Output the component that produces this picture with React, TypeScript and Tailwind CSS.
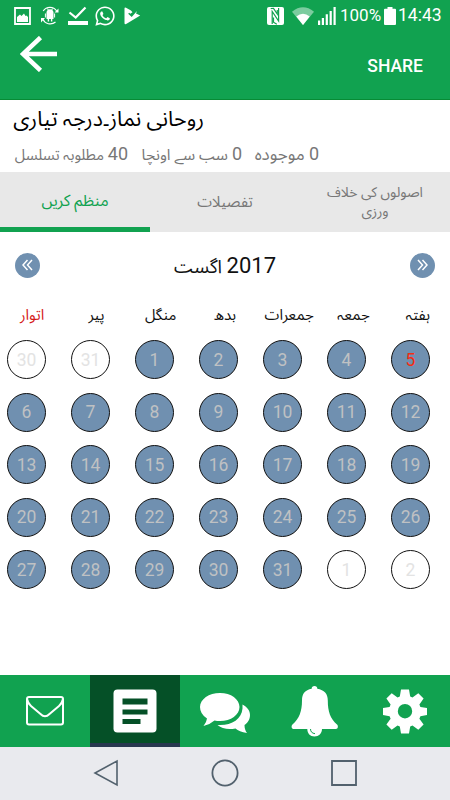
import type { ReactNode } from "react"
import { FaWhatsapp } from "react-icons/fa"


type TabProps = {
    title: string,
    active?: boolean
}

type DayProps = {
    day: number,
    outside?: boolean,
    today?: boolean
}

const stats = [
    { value: 40, label: "مطلوبہ تسلسل", style: "w-[115px] text-[14.8px]" },
    { value: 0, label: "سب سے اونچا", style: "w-[103px] ml-[11px] text-[15.5px]" },
    { value: 0, label: "موجودہ", style: "w-[65px] ml-[12px] text-[17px]" },
]

const weekdays = ["اتوار", "پیر", "منگل", "بدھ", "جمعرات", "جمعہ", "ہفتہ"]

const days: DayProps[] = [
    { day: 30, outside: true },
    { day: 31, outside: true },
    ...Array.from({ length: 31 }, (_, i) => ({ day: i + 1, today: i + 1 === 5 })),
    { day: 1, outside: true },
    { day: 2, outside: true },
]


function StatusBar() {
    return (
        <div className="flex h-[31px] items-center justify-between pl-[14px] pr-[8px] text-white">
            <div className="flex items-center">
                <svg width="17" height="18" viewBox="0 0 17 18" fill="none">
                    <path d="M1 1h15v16H1z" stroke="currentColor" strokeWidth="1.8" />
                    <path d="M3 15V10l3-2.5 1.5 1.5L10 6.5l1.5 2.5 1-.5L14 10v5z" fill="currentColor" />
                </svg>
                <svg className="ml-[10px]" width="18" height="19" viewBox="0 0 18 19" fill="none" stroke="currentColor">
                    <path d="M2.2 5A8.2 8.2 0 0 1 15.7 5M1.7 13A8.2 8.2 0 0 0 14.5 16" strokeWidth="1.2" />
                    <path d="M13.5 6.5h4V2.5zM0 16.5v-4.5h4z" fill="currentColor" stroke="none" />
                    <path d="M5.5 6.5Q5.7 3.5 9 3.3q3.3.2 3.5 3.2V13h-1.2v2.5H9.9V13H8.1v2.5H6.7V13H5.5z" fill="currentColor" stroke="none" />
                    <path d="M4.4 7.5v4M13.6 7.5v4M6.3 2.5l1 1.5M11.7 2.5l-1 1.5" strokeWidth="1" />
                </svg>
                <svg className="ml-[9px]" width="20" height="19" viewBox="0 0 20 19" fill="none">
                    <path d="M1.5 6.5l6.2 5L17.5 1.5" stroke="currentColor" strokeWidth="2.2" />
                    <path d="M0 15h20v4H0z" fill="currentColor" />
                </svg>
                <FaWhatsapp className="ml-[6px]" size={22} />
                <svg className="ml-[8px]" width="17" height="18" viewBox="0 0 17 18">
                    <path d="M.5 1.5Q.5.2 2 .8l5 2.8 1.5 1.6-2.2 1.5-1.1-1-1 1L7.7 10 13 4l-1 2.6 4.2 2L3 16.6Q.5 18 .5 16z" fill="currentColor" />
                </svg>
            </div>
            <div className="flex items-center">
                <svg width="17" height="18" viewBox="0 0 17 18">
                    <rect width="17" height="18" rx="2" fill="currentColor" />
                    <path d="M5.2 17V4.5l6.4 9.5V1M3.7 1.5l2.8-.2 3.8 5.8V3M6.5 10.5v4.7l3.3 2" fill="none" stroke="#11a250" strokeWidth="1.2" />
                </svg>
                <svg className="ml-[8px]" width="22" height="18" viewBox="0 0 22 18" fill="currentColor">
                    <path d="M11 18L0 4.7Q11-4 22 4.7z" opacity=".45" />
                    <path d="M11 18L4.3 9.4Q11 4.3 17.7 9.4z" />
                </svg>
                <svg className="ml-[4px]" width="18" height="18" viewBox="0 0 18 18" fill="currentColor">
                    <path d="M0 13.5h2.2V18H0zM3.8 11H6v7H3.8zM7.7 7.3h2.2V18H7.7zM11.6 4h2.2v14h-2.2zM15.5 0h2.2v18h-2.2z" />
                </svg>
                <span className="ml-[4px] w-[39px] text-[17px] whitespace-nowrap">100%</span>
                <svg className="ml-[5px]" width="12" height="18" viewBox="0 0 12 18" fill="currentColor">
                    <path d="M3.5 0h5v1.8H11a1 1 0 0 1 1 1V17a1 1 0 0 1-1 1H1a1 1 0 0 1-1-1V2.8a1 1 0 0 1 1-1h2.5z" />
                </svg>
                <span className="ml-[2px] w-[44px] text-[17.5px] whitespace-nowrap">14:43</span>
            </div>
        </div>
    )
}


function Header() {
    return (
        <header className="h-[100px] border-b border-[#078b35] bg-[#11a250]">
            <StatusBar />
            <div className="flex h-[68px] items-start justify-between pl-[20px] pr-[27px] text-white">
                <button className="mt-[5px]">
                    <svg width="38" height="36" viewBox="0 0 38 36" fill="none" stroke="currentColor">
                        <path d="M37 18H3M20.5 1.5L3 18l17.5 16.5" strokeWidth="4.5" />
                    </svg>
                </button>
                <button className="mt-[22px] text-[17.5px] leading-[26px] font-medium">SHARE</button>
            </div>
        </header>
    )
}


function Tab({ title, active }: TabProps) {
    return (
        <button
            dir="rtl"
            className={active
                ? "h-full w-[150px] border-b-[5px] border-[#11a250] pt-[3px] text-[16px] text-[#11a250]"
                : "h-full w-[150px] text-[15px] text-[#777]"}
        >
            {title}
        </button>
    )
}


function Arrow({ next }: { next?: boolean }) {
    return (
        <button className="flex size-[25px] items-center justify-center rounded-full bg-[#7090b0] text-white">
            <svg width="11" height="12" viewBox="0 0 11 12" fill="none" stroke="currentColor" strokeWidth="1.5">
                {next
                    ? <path d="M1 1l4.5 5L1 11M5.5 1L10 6l-4.5 5" />
                    : <path d="M5.5 1L1 6l4.5 5M10 1L5.5 6l4.5 5" />}
            </svg>
        </button>
    )
}


function Day({ day, outside, today }: DayProps) {

    const color = outside ? "bg-white text-[#e3e3e3]" : today ? "bg-[#7090b0] text-[#f42d13]" : "bg-[#7090b0] text-[#bfc1c3]"

    return (
        <button className={`flex size-[39px] items-center justify-center rounded-full border border-[#111] pt-px text-[17.5px] ${color}`}>
            {day}
        </button>
    )
}


function NavItem({ active, children }: { active?: boolean, children: ReactNode }) {
    return (
        <button className={active
            ? "flex w-[90px] justify-center border-b-4 border-[#283850] bg-[#055027]"
            : "flex w-[90px] justify-center"}
        >
            {children}
        </button>
    )
}


function BottomNav() {
    return (
        <nav className="flex h-[72px] bg-[#11a250] text-white">
            <NavItem>
                <svg width="90" height="72" viewBox="0 0 90 72" fill="none" stroke="currentColor" strokeWidth="2">
                    <rect x="27" y="22" width="36" height="27.5" rx="2" />
                    <path d="M27 24Q28 28.5 31 31l9.5 8q4.5 4.5 9 0l9.5-8q3-2.5 4-7" />
                </svg>
            </NavItem>
            <NavItem active>
                <svg className="shrink-0" width="90" height="68" viewBox="0 0 90 68">
                    <rect x="23.5" y="14.5" width="43" height="43" rx="4" fill="currentColor" />
                    <path d="M32.5 23.5h25v6h-25zM32.5 34.5h25v5h-25zM32.5 44h18v5h-18z" fill="#055027" />
                </svg>
            </NavItem>
            <NavItem>
                <svg width="90" height="72" viewBox="0 0 90 72" fill="currentColor">
                    <path d="M40 18c11 0 19.5 6.2 19.5 14S51 46 40 46q-3 0-5.5-.5Q30 49.5 23.5 51q3-3.5 3.5-7.5-7-4.5-7-11.5c0-7.8 9-14 20-14z" />
                    <path d="M62.5 28.5c4.5 2.3 7.500 6 7.500 10.500 0 4.700-2.500 8-5.500 10 0 3.500 1 6 2.500 8-5.500-.5-9-2.500-11.500-4.500q-11.500 2-18-3.500c13.500 1 24-5.500 25-16.500z" transform="translate(0 1)" />
                </svg>
            </NavItem>
            <NavItem>
                <svg width="90" height="72" viewBox="0 0 90 72" fill="currentColor">
                    <path d="M44.5 11c1.8 0 2.8 1 2.8 2.8 7 1.2 10.500 5 10.500 11.700 0 11 2.500 18 9.200 24 1.500 1.500 1 4.500-1 4.500h-14c0 4.500-3.200 7.500-7.500 7.500S37.300 58.500 37.300 54H23.500c-2 0-2.500-3-1-4.500 6.700-6 9.500-13 9.500-24 0-6.700 3-10.500 9.700-11.700C41.700 12 42.700 11 44.500 11z" />
                    <path d="M40.5 54q0 4 4.500 4.700" fill="none" stroke="#11a250" strokeWidth="1" />
                </svg>
            </NavItem>
            <NavItem>
                <svg width="90" height="72" viewBox="0 0 90 72" fill="currentColor">
                    <path fillRule="evenodd" d="M41 14.5h8l1.2 7 2.3 1 5.8-4.2 5.3 5.3-4.2 5.9 1 2.5 6.6 1v7l-6.6 1.2-1 2.5 4.2 5.7-5.3 5.4-5.8-4.2-2.3 1-1.2 6.900h-8l-1.200-6.900-2.300-1-5.800 4.200-5.300-5.400 4.200-5.700-1-2.500-6.600-1.200v-7l6.600-1 1-2.500-4.200-5.900 5.300-5.300 5.800 4.200 2.300-1zM45 29a7.200 7.200 0 1 0 0 14.400A7.200 7.200 0 0 0 45 29z" />
                </svg>
            </NavItem>
        </nav>
    )
}


function SystemBar() {
    return (
        <div className="flex h-[53px] items-start justify-between bg-[#e9eaee] pt-[12px] pl-[93px] pr-[92px] text-[#52616d]">
            <svg width="27" height="28" viewBox="0 0 27 28" fill="none" stroke="currentColor" strokeWidth="1.6">
                <path d="M24 2v24L2 14z" />
            </svg>
            <svg width="28" height="28" viewBox="0 0 28 28" fill="none" stroke="currentColor" strokeWidth="1.8">
                <circle cx="14" cy="14" r="12.6" />
            </svg>
            <svg width="28" height="28" viewBox="0 0 28 28" fill="none" stroke="currentColor" strokeWidth="1.8">
                <path d="M2 2h24v24H2z" />
            </svg>
        </div>
    )
}


function App() {
    return (
        <div className="flex h-[800px] w-[450px] flex-col overflow-hidden bg-white font-[Roboto,'Noto_Sans_Arabic','DejaVu_Sans',sans-serif]">

            <Header />

            <section className="h-[72px] pl-[13px]">
                <h1 dir="rtl" className="h-[38px] w-[191px] text-[21.3px] leading-[38px] whitespace-nowrap text-black">روحانی نماز۔درجہ تیاری</h1>
                <div className="flex h-[32px] text-[#777]">
                    {stats.map(stat => (
                        <p key={stat.label} dir="rtl" className={`leading-[32px] whitespace-nowrap ${stat.style}`}>
                            <span className="text-[18px]">{stat.value}</span> {stat.label}
                        </p>
                    ))}
                </div>
            </section>

            <div className="flex h-[60px] shrink-0 bg-[#e8e8e8]">
                <Tab title="منظم کریں" active />
                <Tab title="تفصیلات" />
                <button dir="rtl" className="w-[150px] px-6 text-[14px] leading-[19px] text-[#777]">اصولوں کی خلاف ورزی</button>
            </div>

            <main className="flex-1">
                <div className="flex h-[66px] items-center justify-between px-[15px]">
                    <Arrow />
                    <h2 dir="rtl" className="text-[18.5px] text-[#111]"><span className="text-[22px]">2017</span> اگست</h2>
                    <Arrow next />
                </div>
                <div className="grid h-[42px] grid-cols-7 pt-[5px] text-center text-[15px] leading-[24px] text-[#111]">
                    {weekdays.map((name, index) => (
                        <span key={name} dir="rtl" className={index === 0 ? "text-[#d51919]" : ""}>{name}</span>
                    ))}
                </div>
                <div className="grid grid-cols-[repeat(7,64px)] gap-y-[13.5px] pl-[7px]">
                    {days.map((item, index) => (
                        <Day key={index} {...item} />
                    ))}
                </div>
            </main>

            <BottomNav />
            <SystemBar />

        </div>
    )
}

export default App
